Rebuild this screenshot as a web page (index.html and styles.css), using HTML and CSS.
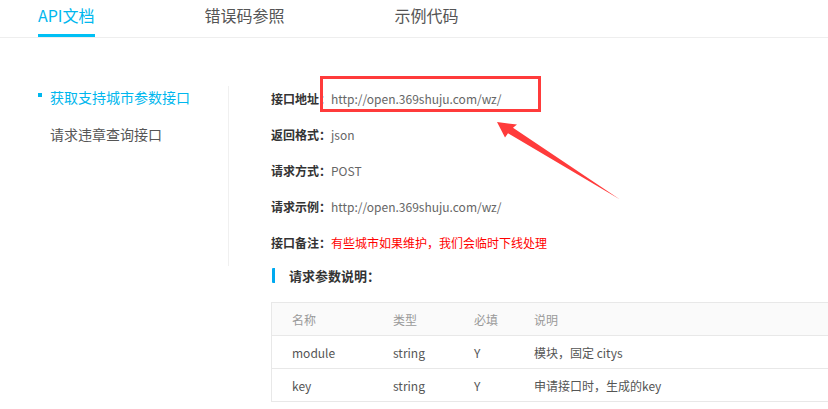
FILE: index.html
```html
<!DOCTYPE html>
<html lang="zh-CN">

<head>
  <meta charset="UTF-8">
  <meta name="viewport" content="width=device-width, initial-scale=1.0">
  <title>API文档</title>
  <link rel="stylesheet" href="styles.css">
</head>

<body>
  <div class="tabs">
    <a class="tab active">API文档</a>
    <a class="tab">错误码参照</a>
    <a class="tab">示例代码</a>
  </div>

  <div class="doc">
    <ul class="side-nav">
      <li class="active">获取支持城市参数接口</li>
      <li>请求违章查询接口</li>
    </ul>

    <div class="doc-main">
      <div class="info-row"><span class="label">接口地址：</span>http://open.369shuju.com/wz/</div>
      <div class="info-row"><span class="label">返回格式：</span>json</div>
      <div class="info-row"><span class="label">请求方式：</span>POST</div>
      <div class="info-row"><span class="label">请求示例：</span>http://open.369shuju.com/wz/</div>
      <div class="info-row"><span class="label">接口备注：</span><span class="warn">有些城市如果维护，我们会临时下线处理</span></div>

      <h3 class="section-title">请求参数说明：</h3>

      <table class="param-table">
        <thead>
          <tr>
            <th class="col-name">名称</th>
            <th class="col-type">类型</th>
            <th class="col-req">必填</th>
            <th>说明</th>
          </tr>
        </thead>
        <tbody>
          <tr>
            <td>module</td>
            <td>string</td>
            <td>Y</td>
            <td>模块，固定 citys</td>
          </tr>
          <tr>
            <td>key</td>
            <td>string</td>
            <td>Y</td>
            <td>申请接口时，生成的key</td>
          </tr>
        </tbody>
      </table>
    </div>
  </div>

  <!-- Markierung aus dem Screenshot -->
  <div class="mark-box"></div>
  <svg class="mark-arrow" width="828" height="409" viewBox="0 0 828 409">
    <polygon points="497,122 517,124.5 513,127.8 620,199.5 508,133.2 505,137.5" fill="#ff3b3b" />
  </svg>
</body>

</html>
```

FILE: styles.css
```css
html,
body {
  overflow: hidden;
}

body {
  margin: 0;
  font-family: "Noto Sans CJK SC", "Liberation Sans", sans-serif;
  color: #555;
  background: #fff;
  position: relative;
  width: 828px;
  height: 409px;
}

/* Tabs oben */
.tabs {
  display: flex;
  gap: 110px;
  padding-left: 38px;
  border-bottom: 1px solid #eeeeee;
}

.tab {
  font-size: 16px;
  line-height: 30px;
  padding-bottom: 4px;
  border-bottom: 3px solid transparent;
  color: #555;
}

.tab.active {
  color: #00b7ee;
  border-bottom-color: #00c0f5;
}

/* Inhalt */
.doc {
  display: flex;
  align-items: flex-start;
  padding-top: 43px;
}

.side-nav {
  flex-shrink: 0;
  list-style: none;
  margin: 5px 0 0;
  padding: 0 0 0 50px;
  width: 178px;
  height: 180px;
  border-right: 1px solid #f0f0f0;
}

.side-nav li {
  position: relative;
  font-size: 14px;
  line-height: 22px;
  margin-bottom: 15px;
  color: #555;
}

.side-nav li.active {
  color: #00b7ee;
}

.side-nav li.active::before {
  content: "";
  position: absolute;
  left: -12px;
  top: 7px;
  width: 4px;
  height: 4px;
  background: #00b7ee;
}

.doc-main {
  flex-shrink: 0;
  padding-left: 42px;
  font-size: 12px;
}

.info-row {
  line-height: 36px;
  color: #666;
  white-space: nowrap;
}

.label {
  font-weight: bold;
  color: #333;
}

.warn {
  color: #ff0000;
}

.section-title {
  margin: 7px 0 19px 1px;
  padding-left: 14px;
  border-left: 3px solid #00aaf0;
  border-radius: 1px;
  font-size: 13px;
  line-height: 15px;
  color: #333;
}

.param-table {
  width: 580px;
  border-collapse: collapse;
  font-size: 12px;
  color: #555;
}

.param-table th,
.param-table td {
  text-align: left;
  padding: 0 0 0 20px;
  height: 32px;
  border-top: 1px solid #e8e8e8;
  border-bottom: 1px solid #e8e8e8;
  white-space: nowrap;
}

.param-table tr > :first-child {
  border-left: 1px solid #e8e8e8;
}

.param-table th {
  font-weight: normal;
  color: #999;
  background: #fafafa;
}

.col-name {
  width: 81px;
}

.col-type {
  width: 61px;
}

.col-req {
  width: 40px;
}

/* rote Hervorhebung */
.mark-box {
  position: absolute;
  left: 320px;
  top: 76px;
  width: 215px;
  height: 30px;
  border: 3px solid #ff3b3b;
}

.mark-arrow {
  position: absolute;
  left: 0;
  top: 0;
}
```
